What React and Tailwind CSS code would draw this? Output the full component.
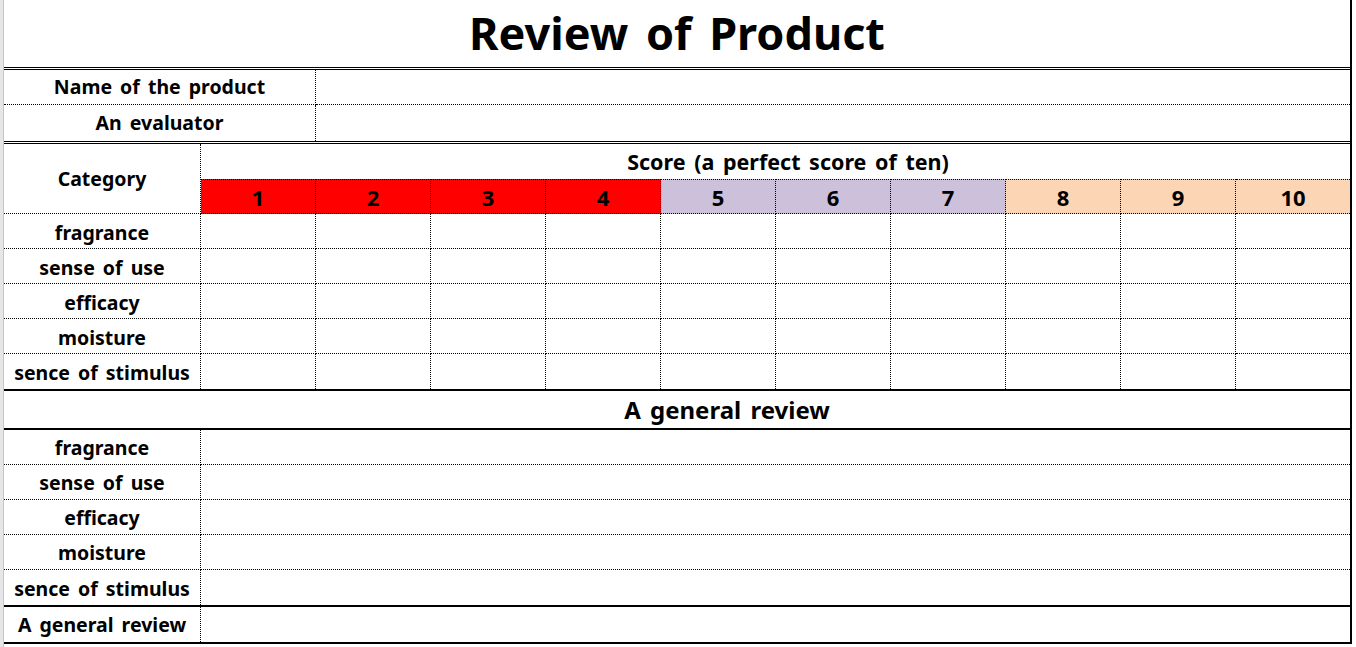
import React from 'react';

const font = { fontFamily: '"Noto Sans", "Open Sans", sans-serif' };

const categories = ['fragrance', 'sense of use', 'efficacy', 'moisture', 'sence of stimulus'];
const scores = [1, 2, 3, 4, 5, 6, 7, 8, 9, 10];

// fill colour per score band, like the sheet
const scoreFill = (n) => {
  if (n <= 4) return 'bg-[#ff0000]';
  if (n <= 7) return 'bg-[#ccc0da]';
  return 'bg-[#fcd5b4]';
};

function LabelCell({ children, className = '' }) {
  return (
    <div className={`flex items-center justify-center border-b border-r border-dotted border-black text-[19.5px] font-bold leading-none [word-spacing:3px] ${className}`}>
      {children}
    </div>
  );
}

export default function App() {
  return (
    <div className="flex h-[647px] w-full bg-white text-black" style={font}>
      <div className="w-[4px] shrink-0 border-r border-[#c6c6c6] bg-[#e6e6e6]" />

      <div className="flex w-[1348px] shrink-0 flex-col">
        <div className="flex flex-col border-r-2 border-black">
          {/* title */}
          <div className="flex h-[70px] items-center justify-center border-b-[3px] border-double border-black pb-[2px]">
            <h1 className="text-[45px] font-bold leading-none [word-spacing:6px]">Review of Product</h1>
          </div>

          {/* product info */}
          <div className="grid grid-cols-[312px_1fr] border-b-[3px] border-double border-black">
            <LabelCell className="h-[35px]">Name of the product</LabelCell>
            <div className="h-[35px] border-b border-dotted border-black" />
            <LabelCell className="h-[36px] border-b-0">An evaluator</LabelCell>
            <div className="h-[36px]" />
          </div>

          {/* score grid */}
          <div className="grid grid-cols-[197px_repeat(9,115px)_1fr] border-b-2 border-black">
            <LabelCell className="row-span-2 h-[70px]">Category</LabelCell>
            <div className="col-span-10 flex h-[35px] items-center justify-center pl-[25px] text-[21.5px] font-bold leading-none [word-spacing:3px]">
              Score (a perfect score of ten)
            </div>
            {scores.map((n) => (
              <div
                key={n}
                className={`flex h-[35px] items-center justify-center border-t border-b border-dotted border-black text-[22px] font-bold leading-none ${n < 10 ? 'border-r' : ''} ${scoreFill(n)}`}
              >
                {n}
              </div>
            ))}
            {categories.map((c, i) => (
              <React.Fragment key={c}>
                <LabelCell className={`h-[35px] pt-[3px] ${i === categories.length - 1 ? 'border-b-0' : ''}`}>{c}</LabelCell>
                {scores.map((n) => (
                  <div
                    key={n}
                    className={`h-[35px] border-dotted border-black ${i === categories.length - 1 ? '' : 'border-b'} ${n < 10 ? 'border-r' : ''}`}
                  />
                ))}
              </React.Fragment>
            ))}
          </div>

          {/* general review */}
          <div className="flex h-[39px] items-center justify-center border-b-2 border-black pl-[100px] text-[24px] font-bold leading-none [word-spacing:3px]">
            A general review
          </div>
          <div className="grid grid-cols-[197px_1fr] border-b-2 border-black">
            {categories.map((c, i) => (
              <React.Fragment key={c}>
                <LabelCell className={`h-[35px] pt-[2px] ${i === categories.length - 1 ? 'border-b-0' : ''}`}>{c}</LabelCell>
                <div className={`h-[35px] border-dotted border-black ${i === categories.length - 1 ? '' : 'border-b'}`} />
              </React.Fragment>
            ))}
          </div>
          <div className="grid grid-cols-[197px_1fr] border-b-2 border-black">
            <LabelCell className="h-[35px] border-b-0">A general review</LabelCell>
            <div className="h-[35px]" />
          </div>
        </div>
        <div className="flex-1" />
      </div>
    </div>
  );
}
